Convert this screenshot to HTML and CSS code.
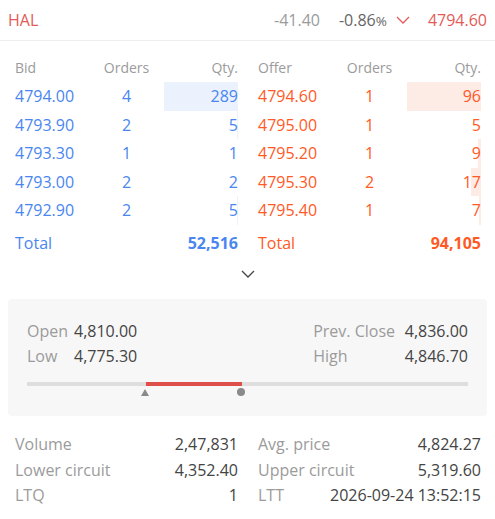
FILE: index.html
```html
<!DOCTYPE html>
<html>
<head>
<meta charset="utf-8">
<link rel="stylesheet" href="styles.css">
</head>
<body>
<div class="app">
  <header class="top">
    <span class="sym">HAL</span>
    <span class="top-right">
      <span class="chg">-41.40</span>
      <span class="pct">-0.86<small>%</small></span>
      <svg class="arrow" width="14" height="8" viewBox="0 0 14 8"><path d="M1 1 L7 7 L13 1" fill="none" stroke="#e25b58" stroke-width="1.3"/></svg>
      <span class="ltp">4794.60</span>
    </span>
  </header>

  <section class="depth">
    <div class="side bid">
      <div class="row head"><span class="c1">Bid</span><span class="c2">Orders</span><span class="c3">Qty.</span></div>
      <div class="row"><span class="c1">4794.00</span><span class="c2">4</span><span class="c3"><i class="bar" style="width:74px"></i><b>289</b></span></div>
      <div class="row"><span class="c1">4793.90</span><span class="c2">2</span><span class="c3"><i class="bar" style="width:1px"></i><b>5</b></span></div>
      <div class="row"><span class="c1">4793.30</span><span class="c2">1</span><span class="c3"><b>1</b></span></div>
      <div class="row"><span class="c1">4793.00</span><span class="c2">2</span><span class="c3"><b>2</b></span></div>
      <div class="row"><span class="c1">4792.90</span><span class="c2">2</span><span class="c3"><i class="bar" style="width:1px"></i><b>5</b></span></div>
      <div class="row total"><span class="c1">Total</span><span class="c3"><b>52,516</b></span></div>
    </div>
    <div class="side ask">
      <div class="row head"><span class="c1">Offer</span><span class="c2">Orders</span><span class="c3">Qty.</span></div>
      <div class="row"><span class="c1">4794.60</span><span class="c2">1</span><span class="c3"><i class="bar" style="width:74px"></i><b>96</b></span></div>
      <div class="row"><span class="c1">4795.00</span><span class="c2">1</span><span class="c3"><b>5</b></span></div>
      <div class="row"><span class="c1">4795.20</span><span class="c2">1</span><span class="c3"><i class="bar" style="width:3px"></i><b>9</b></span></div>
      <div class="row"><span class="c1">4795.30</span><span class="c2">2</span><span class="c3"><i class="bar" style="width:10px"></i><b>17</b></span></div>
      <div class="row"><span class="c1">4795.40</span><span class="c2">1</span><span class="c3"><i class="bar" style="width:2px"></i><b>7</b></span></div>
      <div class="row total"><span class="c1">Total</span><span class="c3"><b>94,105</b></span></div>
    </div>
  </section>

  <div class="more">
    <svg width="14" height="8" viewBox="0 0 14 8"><path d="M1 1 L7 7 L13 1" fill="none" stroke="#444" stroke-width="1.3"/></svg>
  </div>

  <section class="ohlc">
    <div class="ohlc-grid">
      <span class="lbl">Open</span><span class="val">4,810.00</span><span class="lbl">Prev. Close</span><span class="val r">4,836.00</span>
      <span class="lbl">Low</span><span class="val">4,775.30</span><span class="lbl">High</span><span class="val r">4,846.70</span>
    </div>
    <div class="range">
      <div class="track"><div class="fill"></div></div>
      <div class="markers">
        <svg class="tri" width="8" height="7" viewBox="0 0 8 7"><path d="M4 0 L8 7 L0 7 Z" fill="#8a8a8a"/></svg>
        <span class="dot"></span>
      </div>
    </div>
  </section>

  <section class="stats">
    <div class="stat"><span class="lbl">Volume</span><span class="val">2,47,831</span></div>
    <div class="stat"><span class="lbl">Avg. price</span><span class="val">4,824.27</span></div>
    <div class="stat"><span class="lbl">Lower circuit</span><span class="val">4,352.40</span></div>
    <div class="stat"><span class="lbl">Upper circuit</span><span class="val">5,319.60</span></div>
    <div class="stat"><span class="lbl">LTQ</span><span class="val">1</span></div>
    <div class="stat"><span class="lbl">LTT</span><span class="val">2026-09-24 13:52:15</span></div>
  </section>
</div>
</body>
</html>
```

FILE: styles.css
```css
* { box-sizing: border-box; }
html, body { margin: 0; padding: 0; background: #fff; }
body {
  font-family: "Open Sans", "Noto Sans", sans-serif;
  font-size: 16px;
  color: #444;
}
.app { width: 495px; }

.top {
  display: flex;
  justify-content: space-between;
  align-items: center;
  height: 41px;
  padding: 0 8px;
  border-bottom: 1px solid #eee;
}
.sym { color: #e25b58; }
.top-right { display: flex; align-items: center; }
.chg { color: #9b9b9b; margin-right: 19px; }
.pct { color: #666; }
.pct small { font-size: 13.5px; }
.arrow { margin: 0 18px 0 9px; }
.ltp { color: #e25b58; }

.depth {
  display: flex;
  gap: 20px;
  padding: 12px 14px 0 15px;
}
.side { flex: 1; }
.row {
  display: grid;
  grid-template-columns: 1fr 1fr 1fr;
  align-items: center;
  height: 28.5px;
}
.row.head { height: 29px; font-size: 14px; }
.c1 { text-align: left; }
.c2 { text-align: center; }
.c3 { position: relative; height: 100%; display: flex; align-items: center; justify-content: flex-end; }
.c3 b { font-weight: 400; position: relative; }
.bar { position: absolute; right: 0; top: 0; bottom: 0; }
.bid .row { color: #4a86f0; }
.ask .row { color: #ff5a26; }
.bid .row.head, .ask .row.head { color: #9b9b9b; }
.bid .bar { background: #ebf2fd; }
.ask .bar { background: #fdebe6; }
.row.total { grid-template-columns: 1fr 2fr; height: 36px; }
.row.total b { font-weight: 700; }

.more {
  display: flex;
  justify-content: center;
  padding: 9px 0 21px;
}

.ohlc {
  margin: 0 8px;
  background: #f7f7f7;
  border-radius: 4px;
  padding: 21px 19px 16px 19px;
}
.ohlc-grid {
  display: grid;
  grid-template-columns: 47px 1fr auto 73px;
  grid-auto-rows: 22px;
  row-gap: 3px;
  align-items: center;
}
.ohlc .lbl { color: #9b9b9b; }
.ohlc .val { color: #444; }
.ohlc .val.r { text-align: right; }
.range { margin-top: 15px; }
.track { position: relative; height: 4px; background: #dedede; }
.fill { position: absolute; left: 119px; width: 96px; top: 0; bottom: 0; background: #df4e4b; }
.markers { position: relative; height: 14px; }
.tri { position: absolute; left: 114px; top: 3px; }
.dot { position: absolute; left: 210px; top: 2px; width: 8px; height: 8px; border-radius: 50%; background: #8a8a8a; }

.stats {
  display: grid;
  grid-template-columns: 1fr 1fr;
  column-gap: 20px;
  padding: 16px 14px 0 15px;
}
.stat {
  display: flex;
  justify-content: space-between;
  height: 25.5px;
  align-items: center;
}
.stat .lbl { color: #9b9b9b; }
.stat .val { color: #444; }
```
